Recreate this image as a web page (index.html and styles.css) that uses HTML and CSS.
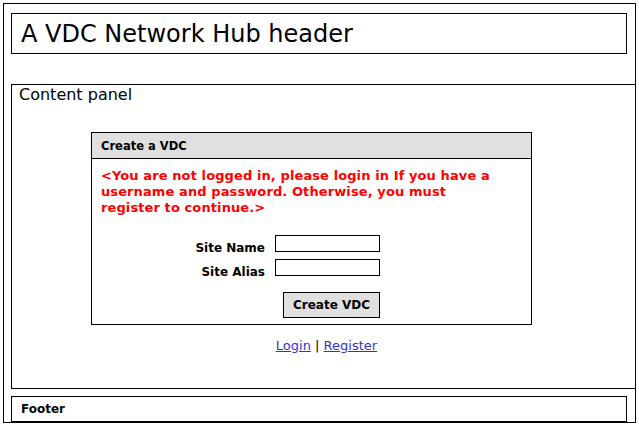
FILE: index.html
```html
<!DOCTYPE html>
<html>
<head>
<meta charset="utf-8">
<link rel="stylesheet" href="styles.css">
</head>
<body>
<div class="page">
  <div class="header">A VDC Network Hub header</div>
  <div class="content">
    <div class="content-title">Content panel</div>
    <div class="box">
      <div class="box-head">Create a VDC</div>
      <div class="box-body">
        <p class="warn">&lt;You are not logged in, please login in If you have a username and password. Otherwise, you must register to continue.&gt;</p>
        <div class="form">
          <label class="lbl">Site Name</label><input class="field" type="text">
          <label class="lbl">Site Alias</label><input class="field" type="text">
          <span></span><div class="btn-cell"><button class="btn">Create VDC</button></div>
        </div>
      </div>
    </div>
    <div class="links"><a href="#">Login</a> | <a href="#">Register</a></div>
  </div>
  <div class="footer">Footer</div>
</div>
</body>
</html>
```
FILE: styles.css
```css
html, body { margin: 0; padding: 0; background: #fff; }
body { font-family: "DejaVu Sans", Verdana, sans-serif; color: #000; }
.page {
  margin: 3px 3px 0 3px;
  border: 1px solid #000;
  padding: 9px 0 0 7px;
  height: 420px;
  box-sizing: border-box;
  display: flex;
  flex-direction: column;
}
.page > * { flex-shrink: 0; }
.header {
  margin-right: 8px;
  border: 1px solid #000;
  height: 41px;
  box-sizing: border-box;
  padding: 6px 0 0 9px;
  font-size: 24px;
  line-height: 28px;
}
.content {
  margin-top: 30px;
  border: 1px solid #000;
  border-right: 0;
  height: 305px;
  box-sizing: border-box;
}
.content-title {
  font-size: 16px;
  line-height: 18px;
  padding: 1px 0 0 7px;
}
.box {
  margin: 28px 0 0 79px;
  width: 441px;
  height: 193px;
  box-sizing: border-box;
  border: 1px solid #000;
}
.box-head {
  background: #e0e0e0;
  border-bottom: 1px solid #000;
  height: 26px;
  box-sizing: border-box;
  padding: 6px 0 0 9px;
  font-size: 11.5px;
  font-weight: bold;
  line-height: 14px;
}
.box-body { padding: 9px 0 0 9px; }
.warn {
  margin: 0;
  color: #f00;
  font-weight: bold;
  font-size: 13px;
  letter-spacing: 0.1px;
  line-height: 16px;
  width: 396px;
}
.form {
  display: grid;
  grid-template-columns: 70px 105px;
  column-gap: 10px;
  row-gap: 7px;
  margin: 19px 0 0 94px;
  align-items: start;
}
.lbl {
  text-align: right;
  font-size: 12px;
  font-weight: bold;
  line-height: 14px;
  height: 17px;
  box-sizing: border-box;
  padding-top: 6px;
  white-space: nowrap;
}
.field {
  width: 105px;
  height: 17px;
  box-sizing: border-box;
  border: 1px solid #000;
  margin: 0;
  padding: 0;
}
.btn-cell { display: flex; justify-content: flex-end; margin-top: 9px; }
.btn {
  width: 97px;
  height: 26px;
  background: #e0e0e0;
  border: 1px solid #000;
  font-family: "DejaVu Sans", Verdana, sans-serif;
  font-size: 12px;
  font-weight: bold;
  padding: 0;
}
.links {
  text-align: center;
  margin-top: 13px;
  font-size: 13px;
  padding-left: 6px;
}
.links a { color: #3333cc; }
.footer {
  margin: 7px 8px 0 0;
  border: 1px solid #000;
  height: 26px;
  box-sizing: border-box;
  padding: 5px 0 0 9px;
  font-size: 12px;
  font-weight: bold;
  line-height: 14px;
}
```
